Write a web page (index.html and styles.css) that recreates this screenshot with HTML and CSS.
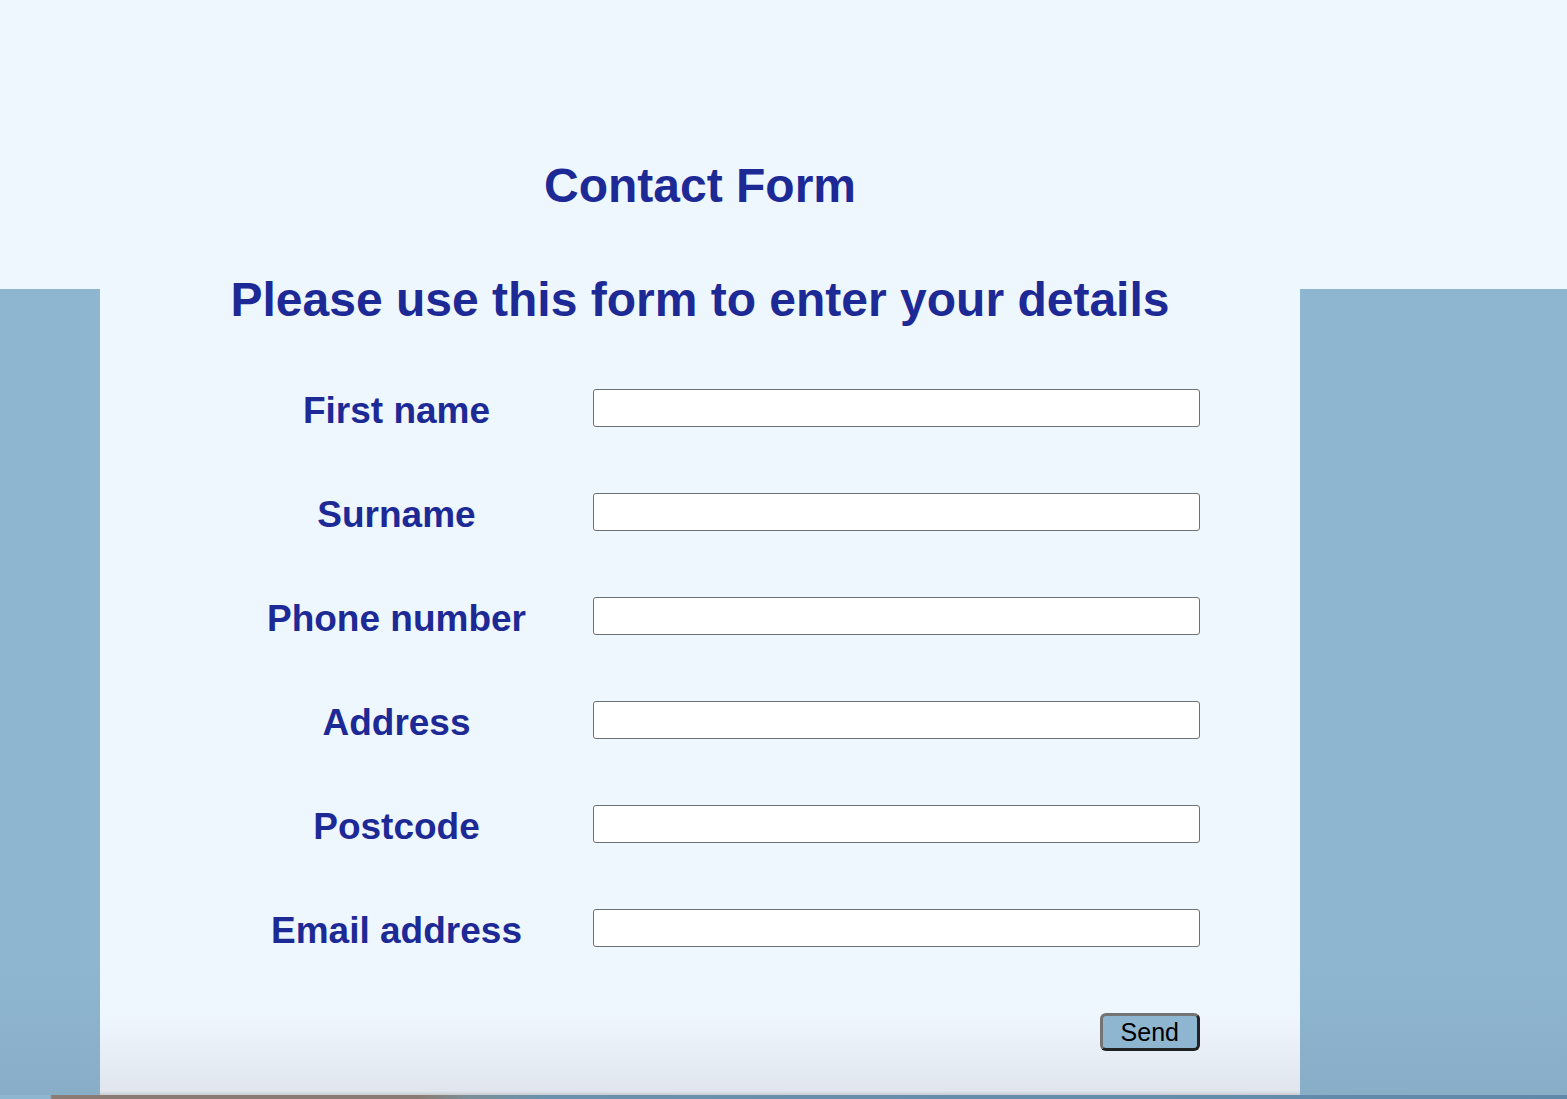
FILE: index.html
```html
<!DOCTYPE html>
<html lang="en">
<head>
<meta charset="utf-8">
<title>Contact Form</title>
<link rel="stylesheet" href="styles.css">
</head>
<body>
<div class="page">
  <header class="masthead">
    <h1 class="title">Contact Form</h1>
  </header>
  <main class="panel">
    <h2 class="subtitle">Please use this form to enter your details</h2>
    <form class="form">
      <label class="label" for="first">First name</label>
      <input class="field" id="first" type="text">
      <label class="label" for="surname">Surname</label>
      <input class="field" id="surname" type="text">
      <label class="label" for="phone">Phone number</label>
      <input class="field" id="phone" type="text">
      <label class="label" for="address">Address</label>
      <input class="field" id="address" type="text">
      <label class="label" for="postcode">Postcode</label>
      <input class="field" id="postcode" type="text">
      <label class="label" for="email">Email address</label>
      <input class="field" id="email" type="text">
      <div class="actions">
        <button class="send" type="button">Send</button>
      </div>
    </form>
  </main>
  <div class="strip"></div>
</div>
</body>
</html>
```

FILE: styles.css
```css
html, body {
  margin: 0;
  padding: 0;
}

body {
  background: linear-gradient(to bottom, #8fb6d1 0, #8fb6d1 88%, #88adc7 100%);
  font-family: "Liberation Sans", Arial, Helvetica, sans-serif;
  color: #1d2a96;
  overflow: hidden;
}

.page {
  height: 1099px;
  display: flex;
  flex-direction: column;
}

.masthead {
  height: 289px;
  flex: none;
  background: #eef6fe;
  box-sizing: border-box;
  padding-top: 158px;
  padding-left: 100px;
}

.title,
.subtitle {
  width: 1200px;
  margin: 0;
  font-size: 48px;
  line-height: 56px;
  font-weight: bold;
  text-align: center;
}

.panel {
  flex: 1;
  width: 1200px;
  margin-left: 100px;
  box-sizing: border-box;
  padding: 0;
  background: linear-gradient(to bottom, #eef6fe 0, #eef6fe 90%, #e1e6ee 99.5%, #c9ccd2 100%);
}

.subtitle {
  margin-top: -17px;
}

.form {
  display: grid;
  grid-template-columns: 393px 607px;
  row-gap: 66px;
  margin: 61px 100px 0;
}

.label {
  font-size: 37px;
  font-weight: bold;
  line-height: 38px;
  padding-top: 3px;
  height: 38px;
  box-sizing: border-box;
  text-align: center;
  white-space: nowrap;
}

.field {
  height: 38px;
  box-sizing: border-box;
  margin: 0;
  border: 1px solid #707070;
  border-radius: 3px;
  background: #ffffff;
  font-family: inherit;
  font-size: 20px;
}

.actions {
  grid-column: 1 / 3;
  display: flex;
  justify-content: flex-end;
}

.send {
  height: 38px;
  padding: 0 18px;
  box-sizing: border-box;
  background: #8fb6d1;
  border-style: solid;
  border-width: 3px;
  border-color: #747474 #222222 #222222 #747474;
  border-radius: 6px;
  font-family: "Liberation Sans", Arial, Helvetica, sans-serif;
  font-size: 25px;
  line-height: 30px;
  color: #000000;
}

.strip {
  height: 4px;
  flex: none;
  background: linear-gradient(to right, #8fb6d1 0, #8fb6d1 50px, #8a7c74 52px, #8a7c74 420px, #7a8f98 470px, #6a91ad 540px, #5f88a9 100%);
}
```
